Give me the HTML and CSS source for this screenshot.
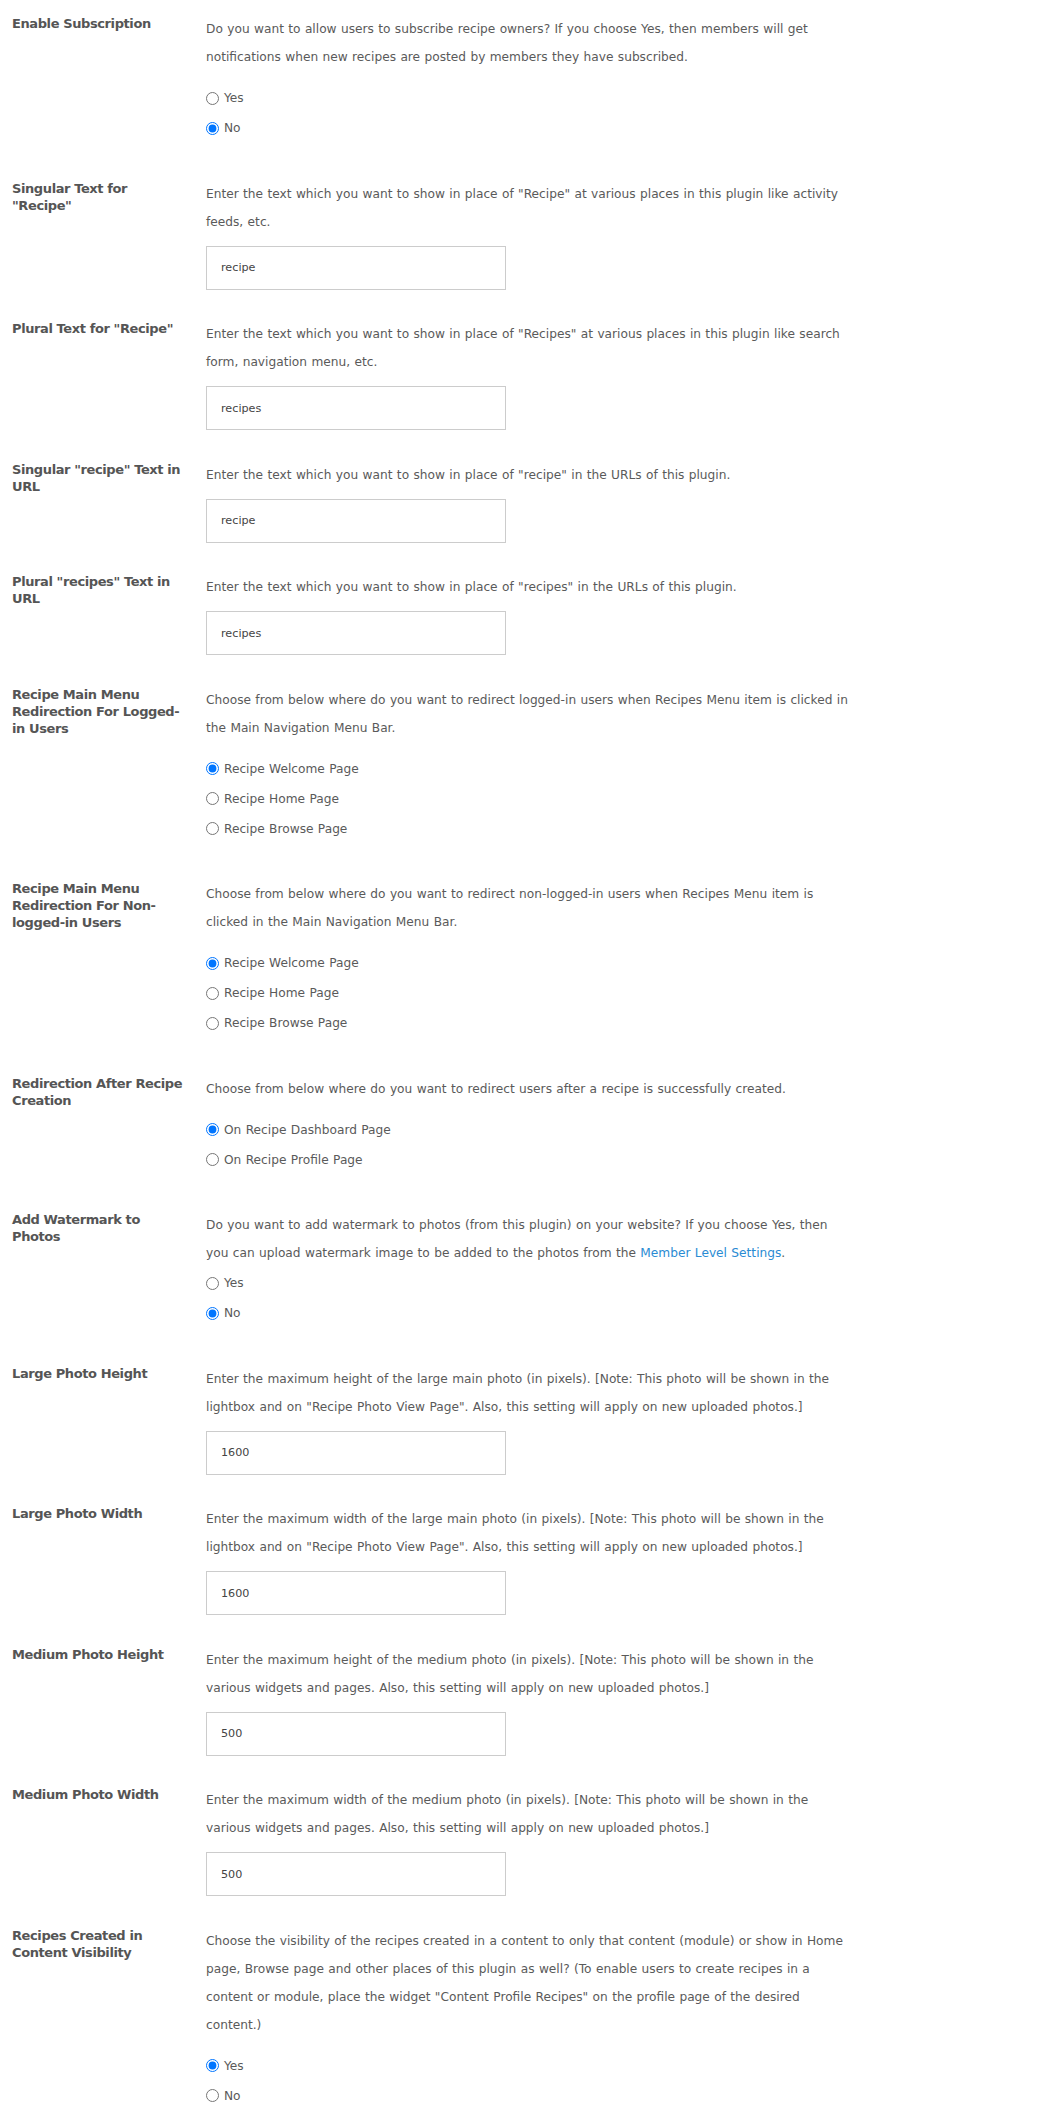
FILE: index.html
```html
<!DOCTYPE html>
<html lang="en">
<head>
<meta charset="utf-8">
<title>Recipe Settings</title>
<link rel="stylesheet" href="styles.css">
</head>
<body>
<div class="settings">

  <div class="row">
    <div class="label">Enable Subscription</div>
    <div class="field">
      <p class="desc">Do you want to allow users to subscribe recipe owners? If you choose Yes, then members will get notifications when new recipes are posted by members they have subscribed.</p>
      <ul class="radios">
        <li><label class="opt"><input type="radio" name="sub"><span>Yes</span></label></li>
        <li><label class="opt"><input type="radio" name="sub" checked><span>No</span></label></li>
      </ul>
    </div>
  </div>

  <div class="row">
    <div class="label">Singular Text for "Recipe"</div>
    <div class="field">
      <p class="desc">Enter the text which you want to show in place of "Recipe" at various places in this plugin like activity feeds, etc.</p>
      <input class="text-input" type="text" value="recipe">
    </div>
  </div>

  <div class="row">
    <div class="label">Plural Text for "Recipe"</div>
    <div class="field">
      <p class="desc">Enter the text which you want to show in place of "Recipes" at various places in this plugin like search form, navigation menu, etc.</p>
      <input class="text-input" type="text" value="recipes">
    </div>
  </div>

  <div class="row">
    <div class="label">Singular "recipe" Text in URL</div>
    <div class="field">
      <p class="desc">Enter the text which you want to show in place of "recipe" in the URLs of this plugin.</p>
      <input class="text-input" type="text" value="recipe">
    </div>
  </div>

  <div class="row">
    <div class="label">Plural "recipes" Text in URL</div>
    <div class="field">
      <p class="desc">Enter the text which you want to show in place of "recipes" in the URLs of this plugin.</p>
      <input class="text-input" type="text" value="recipes">
    </div>
  </div>

  <div class="row">
    <div class="label">Recipe Main Menu Redirection For Logged-in Users</div>
    <div class="field">
      <p class="desc">Choose from below where do you want to redirect logged-in users when Recipes Menu item is clicked in the Main Navigation Menu Bar.</p>
      <ul class="radios">
        <li><label class="opt"><input type="radio" name="redir1" checked><span>Recipe Welcome Page</span></label></li>
        <li><label class="opt"><input type="radio" name="redir1"><span>Recipe Home Page</span></label></li>
        <li><label class="opt"><input type="radio" name="redir1"><span>Recipe Browse Page</span></label></li>
      </ul>
    </div>
  </div>

  <div class="row">
    <div class="label">Recipe Main Menu Redirection For Non-logged-in Users</div>
    <div class="field">
      <p class="desc">Choose from below where do you want to redirect non-logged-in users when Recipes Menu item is clicked in the Main Navigation Menu Bar.</p>
      <ul class="radios">
        <li><label class="opt"><input type="radio" name="redir2" checked><span>Recipe Welcome Page</span></label></li>
        <li><label class="opt"><input type="radio" name="redir2"><span>Recipe Home Page</span></label></li>
        <li><label class="opt"><input type="radio" name="redir2"><span>Recipe Browse Page</span></label></li>
      </ul>
    </div>
  </div>

  <div class="row">
    <div class="label">Redirection After Recipe Creation</div>
    <div class="field">
      <p class="desc">Choose from below where do you want to redirect users after a recipe is successfully created.</p>
      <ul class="radios">
        <li><label class="opt"><input type="radio" name="redir3" checked><span>On Recipe Dashboard Page</span></label></li>
        <li><label class="opt"><input type="radio" name="redir3"><span>On Recipe Profile Page</span></label></li>
      </ul>
    </div>
  </div>

  <div class="row">
    <div class="label">Add Watermark to Photos</div>
    <div class="field">
      <p class="desc">Do you want to add watermark to photos (from this plugin) on your website? If you choose Yes, then you can upload watermark image to be added to the photos from the <a class="link" href="#">Member Level Settings</a>.</p>
      <ul class="radios radios-tight">
        <li><label class="opt"><input type="radio" name="wm"><span>Yes</span></label></li>
        <li><label class="opt"><input type="radio" name="wm" checked><span>No</span></label></li>
      </ul>
    </div>
  </div>

  <div class="row">
    <div class="label">Large Photo Height</div>
    <div class="field">
      <p class="desc">Enter the maximum height of the large main photo (in pixels). [Note: This photo will be shown in the lightbox and on "Recipe Photo View Page". Also, this setting will apply on new uploaded photos.]</p>
      <input class="text-input" type="text" value="1600">
    </div>
  </div>

  <div class="row">
    <div class="label">Large Photo Width</div>
    <div class="field">
      <p class="desc">Enter the maximum width of the large main photo (in pixels). [Note: This photo will be shown in the lightbox and on "Recipe Photo View Page". Also, this setting will apply on new uploaded photos.]</p>
      <input class="text-input" type="text" value="1600">
    </div>
  </div>

  <div class="row">
    <div class="label">Medium Photo Height</div>
    <div class="field">
      <p class="desc">Enter the maximum height of the medium photo (in pixels). [Note: This photo will be shown in the various widgets and pages. Also, this setting will apply on new uploaded photos.]</p>
      <input class="text-input" type="text" value="500">
    </div>
  </div>

  <div class="row">
    <div class="label">Medium Photo Width</div>
    <div class="field">
      <p class="desc">Enter the maximum width of the medium photo (in pixels). [Note: This photo will be shown in the various widgets and pages. Also, this setting will apply on new uploaded photos.]</p>
      <input class="text-input" type="text" value="500">
    </div>
  </div>

  <div class="row">
    <div class="label">Recipes Created in Content Visibility</div>
    <div class="field">
      <p class="desc">Choose the visibility of the recipes created in a content to only that content (module) or show in Home page, Browse page and other places of this plugin as well? (To enable users to create recipes in a content or module, place the widget "Content Profile Recipes" on the profile page of the desired content.)</p>
      <ul class="radios">
        <li><label class="opt"><input type="radio" name="vis" checked><span>Yes</span></label></li>
        <li><label class="opt"><input type="radio" name="vis"><span>No</span></label></li>
      </ul>
    </div>
  </div>

</div>
</body>
</html>
```

FILE: styles.css
```css
html, body {
  margin: 0;
  padding: 0;
  background: #ffffff;
}

body {
  font-family: "DejaVu Sans", Verdana, sans-serif;
  color: #555555;
}

.settings {
  display: flex;
  flex-direction: column;
}

.row {
  display: flex;
  align-items: flex-start;
  padding: 15px 0 15.5px;
}

.label {
  flex: none;
  width: 176px;
  padding-left: 12px;
  padding-right: 18px;
  font-size: 13px;
  font-weight: bold;
  line-height: 17px;
  letter-spacing: -0.4px;
  color: #555555;
}

.field {
  flex: none;
  width: 648px;
}

.desc {
  margin: 0;
  font-size: 12.2px;
  word-spacing: 0.5px;
  line-height: 28px;
  color: #5a5a5a;
}

.link {
  color: #2a8bd3;
  text-decoration: none;
}

.text-input {
  display: block;
  box-sizing: border-box;
  width: 300px;
  height: 44px;
  margin: 10px 0 0;
  padding: 0 14px;
  border: 1px solid #cccccc;
  border-radius: 0;
  background: #ffffff;
  font-family: "DejaVu Sans", Verdana, sans-serif;
  font-size: 11.2px;
  color: #444444;
  outline: none;
}

.radios {
  list-style: none;
  margin: 12px 0 6px;
  padding: 0;
}

.radios-tight {
  margin-top: 1px;
}

.radios li {
  height: 30px;
  display: flex;
  align-items: center;
}

.opt {
  display: flex;
  align-items: center;
  font-size: 12.2px;
  word-spacing: 0.5px;
  color: #5a5a5a;
}

.opt input {
  width: 13px;
  height: 13px;
  margin: 0 5px 0 0;
}
```
